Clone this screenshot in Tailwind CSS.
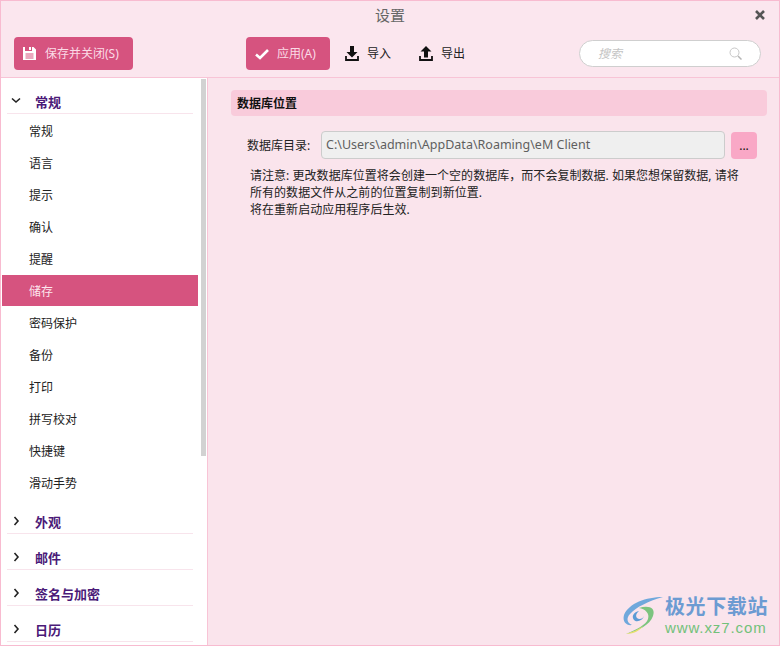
<!DOCTYPE html>
<html lang="zh"><head><meta charset="utf-8"><script src="https://cdn.jsdelivr.net/npm/@tailwindcss/browser@4"></script></head>
<body class="m-0 overflow-hidden">
<div class="relative w-[780px] h-[646px] box-border border border-[#f8bbd0] bg-[#fae4ec] flex flex-col text-[12px] text-[#222] font-['Noto_Sans','Noto_Sans_CJK_SC',sans-serif] overflow-hidden">
  <header class="h-[77px] shrink-0 border-b border-[#f8c4d6] relative bg-[#fbe6ee]">
    <div class="h-[29px] flex items-center justify-center text-[15px] text-[#666]">设置</div>
    <svg class="absolute right-[13px] top-[8px] w-[12px] h-[12px]" viewBox="0 0 12 12"><path d="M2 2l8 8M10 2l-8 8" stroke="#555" stroke-width="2.6"/></svg>
    <div class="flex items-center h-[33px] mt-[7px] pl-[13px] pr-[18px]">
      <button class="w-[119px] h-[33px] rounded-[4px] bg-[#d6537f] text-[#fbdbe6] flex items-center pl-[8px] gap-[8px]">
        <svg class="w-[15px] h-[15px]" viewBox="0 0 15 15"><path d="M1 1h2v4h7V1h1.5L14 3.5V14H1z M7 1h2v3H7z" fill="#fff"/><path d="M3.500 8h8M3.500 10h8M3.500 12h8" stroke="#d6537f"/></svg>
        <span>保存并关闭(S)</span>
      </button>
      <button class="ml-[113px] w-[84px] h-[33px] rounded-[4px] bg-[#d6537f] text-[#fbdbe6] flex items-center pl-[9px] gap-[8px]">
        <svg class="w-[14px] h-[14px]" viewBox="0 0 14 14"><path d="M1 7.500l4 3.500 8-8" fill="none" stroke="#fff" stroke-width="2.6"/></svg>
        <span>应用(A)</span>
      </button>
      <div class="ml-[15px] flex items-center gap-[8px]">
        <svg class="w-[14px] h-[15px]" viewBox="0 0 14 15"><path d="M5 0h4v6h3.500L7 11.500 1.500 6H5z" fill="#111"/><path d="M1 10v4h12v-4" fill="none" stroke="#111" stroke-width="1.800"/></svg>
        <span>导入</span>
      </div>
      <div class="ml-[28px] flex items-center gap-[8px]">
        <svg class="w-[14px] h-[15px]" viewBox="0 0 14 15"><path d="M5 11.500h4v-6h3.500L7 0 1.500 5.500H5z" fill="#111"/><path d="M1 10v4h12v-4" fill="none" stroke="#111" stroke-width="1.800"/></svg>
        <span>导出</span>
      </div>
      <div class="ml-auto w-[182px] h-[27px] rounded-full border border-[#cfcfcf] bg-white flex items-center justify-between pl-[18px] pr-[18px] text-[#c4c4c4] italic">
        <span>搜索</span>
        <svg class="w-[13px] h-[13px]" viewBox="0 0 13 13"><circle cx="5.500" cy="5.500" r="4.500" fill="none" stroke="#c8c8c8" stroke-width="1"/><path d="M9 9l3.500 3.500" stroke="#b5b5b5" stroke-width="1.500"/></svg>
      </div>
    </div>
  </header>
  <div class="flex flex-1 min-h-0">
    <aside class="relative w-[207px] shrink-0 bg-white border-r border-[#f8c4d6] overflow-hidden pl-[1px]">
      <div class="absolute left-[200px] top-[1px] w-[5px] h-[377px] bg-[#d2d2d2]"></div>
      <div class="w-[196px] mt-[15px]">
        <div class="ml-[5px] w-[186px] h-[21px] border-b border-[#f8e4ec] flex items-start">
          <svg class="ml-[4px] mt-[4px] w-[10px] h-[7px]" viewBox="0 0 10 7"><path d="M1 1.500l4 3.500 4-3.500" fill="none" stroke="#222" stroke-width="1.600"/></svg>
          <span class="ml-[14px] text-[13px] leading-[18px] font-bold text-[#4b1a78]">常规</span>
        </div>
        <div class="mt-[1px] flex flex-col">
          <div class="h-[32px] pt-[2px] pl-[27px] flex items-center">常规</div>
          <div class="h-[32px] pt-[2px] pl-[27px] flex items-center">语言</div>
          <div class="h-[32px] pt-[2px] pl-[27px] flex items-center">提示</div>
          <div class="h-[32px] pt-[2px] pl-[27px] flex items-center">确认</div>
          <div class="h-[32px] pt-[2px] pl-[27px] flex items-center">提醒</div>
          <div class="h-[31px] mb-[1px] pt-[2px] pl-[27px] flex items-center bg-[#d6537f] text-[#fde6ee]">储存</div>
          <div class="h-[32px] pt-[2px] pl-[27px] flex items-center">密码保护</div>
          <div class="h-[32px] pt-[2px] pl-[27px] flex items-center">备份</div>
          <div class="h-[32px] pt-[2px] pl-[27px] flex items-center">打印</div>
          <div class="h-[32px] pt-[2px] pl-[27px] flex items-center">拼写校对</div>
          <div class="h-[32px] pt-[2px] pl-[27px] flex items-center">快捷键</div>
          <div class="h-[32px] pt-[2px] pl-[27px] flex items-center">滑动手势</div>
        </div>
        <div class="flex flex-col gap-[15px] mt-[14px]">
          <div class="ml-[5px] w-[186px] h-[21px] border-b border-[#f8e4ec] flex items-start"><svg class="ml-[6px] mt-[3px] w-[7px] h-[10px]" viewBox="0 0 7 10"><path d="M1.500 1l3.500 4-3.500 4" fill="none" stroke="#222" stroke-width="1.600"/></svg><span class="ml-[15px] text-[13px] leading-[18px] font-bold text-[#4b1a78]">外观</span></div>
          <div class="ml-[5px] w-[186px] h-[21px] border-b border-[#f8e4ec] flex items-start"><svg class="ml-[6px] mt-[3px] w-[7px] h-[10px]" viewBox="0 0 7 10"><path d="M1.500 1l3.500 4-3.500 4" fill="none" stroke="#222" stroke-width="1.600"/></svg><span class="ml-[15px] text-[13px] leading-[18px] font-bold text-[#4b1a78]">邮件</span></div>
          <div class="ml-[5px] w-[186px] h-[21px] border-b border-[#f8e4ec] flex items-start"><svg class="ml-[6px] mt-[3px] w-[7px] h-[10px]" viewBox="0 0 7 10"><path d="M1.500 1l3.500 4-3.500 4" fill="none" stroke="#222" stroke-width="1.600"/></svg><span class="ml-[15px] text-[13px] leading-[18px] font-bold text-[#4b1a78]">签名与加密</span></div>
          <div class="ml-[5px] w-[186px] h-[21px] border-b border-[#f8e4ec] flex items-start"><svg class="ml-[6px] mt-[3px] w-[7px] h-[10px]" viewBox="0 0 7 10"><path d="M1.500 1l3.500 4-3.500 4" fill="none" stroke="#222" stroke-width="1.600"/></svg><span class="ml-[15px] text-[13px] leading-[18px] font-bold text-[#4b1a78]">日历</span></div>
        </div>
      </div>
    </aside>
    <main class="flex-1 pl-[23px] pr-[12px] pt-[12px] bg-[#fae4ec]">
      <div class="h-[26px] pt-[1px] rounded-[4px] bg-[#f9cbdb] pl-[6px] flex items-center font-bold text-[#111]">数据库位置</div>
      <div class="flex items-center mt-[15px] pl-[16px] h-[28px]">
        <span class="w-[74px] pt-[2px]">数据库目录:</span>
        <div class="w-[404px] h-[28px] box-border rounded-[4px] border border-[#cccccc] bg-[#efefef] flex items-center pl-[4px] pt-[1px] text-[#5f5f5f] text-[12.5px]">C:\Users\admin\AppData\Roaming\eM Client</div>
        <div class="ml-[6px] w-[26px] h-[27px] rounded-[4px] bg-[#f9a8c6] flex items-center justify-center pt-[2px] text-[#111]">...</div>
      </div>
      <p class="mt-[8px] ml-[19px] w-[500px] leading-[17px] tracking-[0.04px] text-[#222]">请注意: 更改数据库位置将会创建一个空的数据库，而不会复制数据. 如果您想保留数据, 请将<br>所有的数据文件从之前的位置复制到新位置.<br>将在重新启动应用程序后生效.</p>
    </main>
  </div>
  <div class="absolute left-[620px] top-[594px] flex items-center">
    <svg class="w-[44px] h-[42px]" viewBox="0 0 44 42"><path d="M42 2C25 2 8 8 3 20c-2 7 3 11 8 10-5-2-6-7-2-11C15 12 28 6 42 2z" fill="#6fa8dc"/><path d="M13 25c-3-4 0-8 5-9-2 2-4 4-2 7 2 2 6 1 7-2-1 4-7 7-10 4z" fill="#5b9bd5"/><path d="M18 13c10-3 17 0 14 8-3 9-15 15-27 18 11-5 20-9 22-15 2-6-3-10-9-11z" fill="#7cc47f"/><path d="M5 39c7-2 13-5 17-8-3 4-8 8-17 8z" fill="#e6e06a"/></svg>
    <div class="ml-0 flex flex-col -mt-[2px]">
      <span class="text-[20px] leading-[24px] font-bold text-[#6c9bd2] tracking-[0.6px]">极光下载站</span>
      <span class="text-[15px] leading-[17px] text-[#72c17a] font-['Liberation_Sans',sans-serif] tracking-[0.9px]">www.xz7.com</span>
    </div>
  </div>
</div>
</body></html>
